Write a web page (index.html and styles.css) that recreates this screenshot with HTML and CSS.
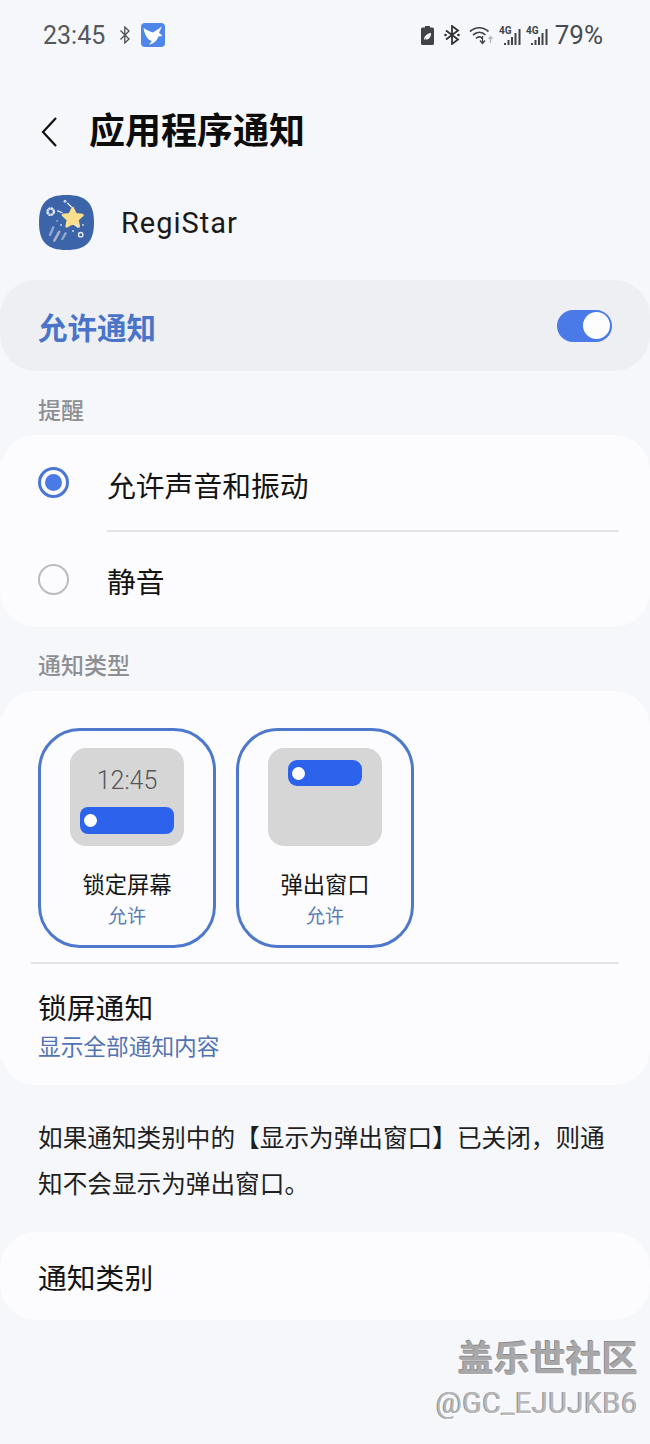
FILE: index.html
```html
<!DOCTYPE html>
<html lang="zh">
<head>
<meta charset="utf-8">
<title>应用程序通知</title>
<link rel="stylesheet" href="styles.css">
</head>
<body>
<div class="phone">
  <header class="status">
    <div class="status-side">
      <span class="clock">23:45</span>
      <svg class="ic-bt-small" width="12" height="18" viewBox="0 0 12 18"><path d="M1.500 4.500l8.500 8.500-4.200 4V1l4.200 4-8.500 8.500" fill="none" stroke="#4e5054" stroke-width="1.300"/></svg>
      <svg class="ic-bird" width="24" height="24" viewBox="0 0 24 24"><rect width="24" height="24" rx="4" fill="#4f86ea"/><path d="M2.500 5C6 7 9 9 12 9.500L21 3.500L18 9.500L21.500 13L17.500 13.500C16 18 12 21 8 21.500L11 18C7 17.500 3.500 12 2.500 5Z" fill="#fff"/></svg>
    </div>
    <div class="status-side">
      <svg class="ic-batt" width="13" height="19" viewBox="0 0 13 19"><path d="M4 0h5v1.500h2.500A1.500 1.500 0 0 1 13 3v14.500a1.500 1.500 0 0 1-1.500 1.500h-10A1.500 1.500 0 0 1 0 17.500V3a1.500 1.500 0 0 1 1.500-1.500H4z" fill="#404348"/><path d="M3 14c0-4 3-6.500 7-7 .3 4-2.500 7-5.500 6.500 .5-1.500 1.500-2.500 2.500-3.500" fill="#fff"/></svg>
      <svg class="ic-bt" width="16" height="20" viewBox="0 0 16 20"><path d="M2 5.500l12 9-6 4.500V1l6 4.500-12 9" fill="none" stroke="#333" stroke-width="1.800"/><circle cx="1.500" cy="10" r="1.300" fill="#333"/><circle cx="14.500" cy="10" r="1.300" fill="#333"/></svg>
      <svg class="ic-wifi" width="24" height="20" viewBox="0 0 24 20"><path d="M1 6.500C6.500 1.500 14 1.500 19.500 6.500M4 10C8 6.500 13 6.500 16.500 10M7 13.300C9 11.500 11.500 11.500 13.500 13.300" fill="none" stroke="#404348" stroke-width="1.700"/><path d="M13.500 11v7M11 15.500l2.500 3 2.500-3" fill="none" stroke="#404348" stroke-width="1.300"/><path d="M21.500 18v-6M19.500 14l2-2.500 2 2.500" fill="none" stroke="#b4b6ba" stroke-width="1.300"/></svg>
      <svg class="ic-sig" width="22" height="24" viewBox="0 0 22 24"><text class="sig-text" x="0" y="10.500">4G</text><g fill="#404348"><rect x="5" y="20" width="2" height="2"/><rect x="8.500" y="17" width="2" height="5"/><rect x="12" y="14" width="2" height="8"/><rect x="15.500" y="10" width="2" height="12"/><rect x="19.500" y="6" width="2" height="16"/></g></svg>
      <svg class="ic-sig" width="22" height="24" viewBox="0 0 22 24"><text class="sig-text" x="0" y="10.500">4G</text><g fill="#404348"><rect x="5" y="20" width="2" height="2"/><rect x="8.500" y="17" width="2" height="5"/><rect x="12" y="14" width="2" height="8"/><rect x="15.500" y="10" width="2" height="12"/><rect x="19.500" y="6" width="2" height="16"/></g></svg>
      <span class="battery">79%</span>
    </div>
  </header>

  <div class="titlebar">
    <svg width="16" height="30" viewBox="0 0 16 30"><path d="M15 1L2 15 15 29" fill="none" stroke="#111" stroke-width="2.200"/></svg>
    <h1>应用程序通知</h1>
  </div>

  <div class="app-row">
    <svg width="55" height="55" viewBox="0 0 55 55">
      <path d="M27.500 0C47 0 55 8 55 27.500C55 47 47 55 27.500 55C8 55 0 47 0 27.500C0 8 8 0 27.500 0Z" fill="#3c64a8"/>
      <path d="M33.700 13l3 6.200 6.800 .9-5 4.700 1.300 6.700-6.100-3.300-6.100 3.300 1.300-6.700-5-4.700 6.800-.9z" fill="#fbdf8c" stroke="#fbdf8c" stroke-width="2.500" stroke-linejoin="round"/>
      <circle cx="11.700" cy="16.700" r="3.200" fill="none" stroke="#eef1f7" stroke-width="2.400" stroke-dasharray="2 .5"/>
      <circle cx="41.700" cy="39.700" r="2.200" fill="none" stroke="#e6ebf5" stroke-width="1.400"/>
      <circle cx="26" cy="6.300" r="1.500" fill="#c8d4ea"/>
      <circle cx="22" cy="30" r="1" fill="#c8d4ea"/>
      <circle cx="44" cy="30" r="1" fill="#c8d4ea"/>
      <circle cx="34" cy="36" r="1" fill="#c8d4ea"/>
      <circle cx="18" cy="26" r=".8" fill="#c8d4ea"/>
      <path d="M28.300 8l4.400 4.300M18.300 15.600l5.300 2.400M36 28.500l3 4" stroke="#e6ebf5" stroke-width="1.300" fill="none"/>
      <path d="M14.300 32.300L11 40" stroke="#8fa8d0" stroke-width="2.400" fill="none" stroke-linecap="round"/>
      <path d="M20.300 36.700l-5 9" stroke="#b0b4c8" stroke-width="2.400" fill="none" stroke-linecap="round"/>
      <path d="M26.600 38.300L23.300 44" stroke="#8fa8d0" stroke-width="2.400" fill="none" stroke-linecap="round"/>
    </svg>
    <span class="app-name">RegiStar</span>
  </div>

  <section class="switch-card">
    <span class="switch-label">允许通知</span>
    <span class="toggle"><span class="knob"></span></span>
  </section>

  <h2 class="section-label label-remind">提醒</h2>
  <section class="card remind">
    <div class="radio-row">
      <span class="radio on"><span class="radio-dot"></span></span>
      <span class="row-text">允许声音和振动</span>
    </div>
    <div class="rule rule-radio"></div>
    <div class="radio-row second">
      <span class="radio"></span>
      <span class="row-text">静音</span>
    </div>
  </section>

  <h2 class="section-label label-type">通知类型</h2>
  <section class="card types">
    <div class="tiles">
      <div class="tile">
        <div class="preview preview-lock">
          <span class="preview-time">12:45</span>
          <span class="notif wide"><span class="notif-dot"></span></span>
        </div>
        <div class="tile-name">锁定屏幕</div>
        <div class="tile-state">允许</div>
      </div>
      <div class="tile">
        <div class="preview preview-pop">
          <span class="notif small"><span class="notif-dot"></span></span>
        </div>
        <div class="tile-name">弹出窗口</div>
        <div class="tile-state">允许</div>
      </div>
    </div>
    <div class="rule rule-types"></div>
    <div class="lock-row">
      <div class="row-text">锁屏通知</div>
      <div class="lock-sub">显示全部通知内容</div>
    </div>
  </section>

  <p class="note">如果通知类别中的【显示为弹出窗口】已关闭，则通知不会显示为弹出窗口。</p>

  <section class="card category">
    <span class="row-text">通知类别</span>
  </section>

  <div class="watermark">
    <div class="wm-title">盖乐世社区</div>
    <div class="wm-user">@GC_EJUJKB6</div>
  </div>
</div>
</body>
</html>
```
FILE: styles.css
```css
* { box-sizing: border-box; }
html, body { margin: 0; padding: 0; }
body {
  background: #f6f7fb;
  font-family: "Roboto", "Noto Sans CJK SC", sans-serif;
  color: #111;
}
.phone { position: relative; width: 650px; height: 1444px; overflow: hidden; }

.status {
  display: flex; justify-content: space-between; align-items: center;
  height: 30px; margin-top: 20px; padding: 0 47px 0 43px;
}
.status-side { display: flex; align-items: center; }
.clock { font-size: 25px; color: #55585c; }
.ic-bt-small { margin-left: 14px; }
.ic-bird { margin-left: 10px; }
.ic-bt { margin-left: 10px; }
.ic-wifi { margin-left: 9px; }
.ic-sig { margin-left: 6px; }
.ic-sig + .ic-sig { margin-left: 5px; }
.battery { font-size: 26px; color: #484b50; margin-left: 7px; }
.sig-text { font-size: 10px; font-weight: 700; fill: #404348; font-family: "Roboto", sans-serif; }

.titlebar {
  display: flex; align-items: center; gap: 32px;
  height: 44px; margin-top: 60px; padding-left: 41px;
}
.titlebar h1 { margin: 0; font-size: 36px; font-weight: 700; line-height: 44px; color: #0c0c0c; }

.app-row {
  display: flex; align-items: center; gap: 27px;
  height: 55px; margin-top: 41px; padding-left: 39px;
}
.app-name { font-size: 29px; color: #1a1a1a; letter-spacing: 1px; }

.switch-card {
  display: flex; align-items: center; justify-content: space-between;
  height: 91px; margin-top: 30px; padding: 0 38px 0 38px;
  background: #eeeff3; border-radius: 36px;
}
.switch-label { font-size: 29.500px; font-weight: 700; color: #4a74c9; }
.toggle {
  display: flex; align-items: center; justify-content: flex-end;
  width: 55px; height: 32px; padding-right: 2px;
  background: #4a79e8; border-radius: 16px;
}
.knob { width: 27px; height: 27px; border-radius: 50%; background: #fdfdfe; }

.section-label { margin: 0; padding-left: 38px; font-size: 23px; font-weight: 500; line-height: 28px; color: #8e8f93; }
.label-remind { margin-top: 27px; }
.label-type { margin-top: 26px; }

.card { background: #fcfcfe; border-radius: 36px; }
.remind { margin-top: 9px; height: 192px; padding-top: 23px; }
.radio-row { display: flex; align-items: center; height: 56px; padding: 2px 0 0 38px; }
.radio-row.second { height: 52px; margin-top: 23px; padding-top: 4px; }
.radio {
  display: flex; align-items: center; justify-content: center;
  width: 31px; height: 31px; margin: -8px 38px 0 0; border-radius: 50%;
  border: 2px solid #bcbcc0;
}
.radio.on { border: 3px solid #4a76d6; margin-top: -10px; }
.radio-dot { width: 17px; height: 17px; border-radius: 50%; background: #4a79e8; }
.row-text { font-size: 28.800px; line-height: 38px; color: #141414; }
.rule { height: 2px; background: #e4e5ea; }
.rule-radio { margin: 16px 31px 0 107px; }

.types { margin-top: 10px; height: 394px; padding: 37px 31px 0 38px; }
.tiles { display: flex; gap: 20px; }
.tile {
  width: 178px; height: 220px; padding-top: 17px;
  border: 3px solid #4d78cb; border-radius: 42px;
  display: flex; flex-direction: column; align-items: center;
}
.preview {
  display: flex; flex-direction: column; align-items: center;
  width: 114px; height: 98px; background: #d6d6d7; border-radius: 16px;
}
.preview-lock { padding-top: 19px; }
.preview-pop { padding-top: 12px; }
.preview-time { font-size: 25px; line-height: 28px; color: #55565a; font-weight: 300; }
.notif { display: flex; align-items: center; background: #2c62ec; border-radius: 8px; padding-left: 4px; }
.notif.wide { width: 94px; height: 27px; margin-top: 12px; }
.notif.small { width: 74px; height: 26px; border-radius: 9px; }
.notif-dot { width: 13px; height: 13px; border-radius: 50%; background: #fff; }
.tile-name { margin-top: 24px; font-size: 22.300px; line-height: 30px; color: #161616; }
.tile-state { margin-top: 4px; font-size: 19px; line-height: 26px; color: #5b7bb3; }
.rule-types { margin: 14px 0 0 -7px; }
.lock-row { padding-top: 26px; }
.lock-sub { font-size: 22.700px; line-height: 30px; color: #5273b5; margin-top: 5px; }

.note { margin: 31px 0 0; padding: 0 38px; font-size: 24.650px; line-height: 46px; color: #1f1f1f; }

.category { display: flex; align-items: center; height: 88px; margin-top: 24px; padding: 6px 0 0 38px; }

.watermark { position: absolute; right: 12px; top: 1338px; text-align: right; }
.wm-title { font-size: 36px; line-height: 44px; font-weight: 700; color: #a8a8aa; text-shadow: -1px -1px 0 #8c8c8e, 1px 1px 0 #fff; }
.wm-user { margin-top: 3px; font-size: 29px; line-height: 36px; letter-spacing: 0.4px; color: #b8b8ba; text-shadow: -1px 0 0 #8f8f91, 1px 1px 0 #fff; }
```
